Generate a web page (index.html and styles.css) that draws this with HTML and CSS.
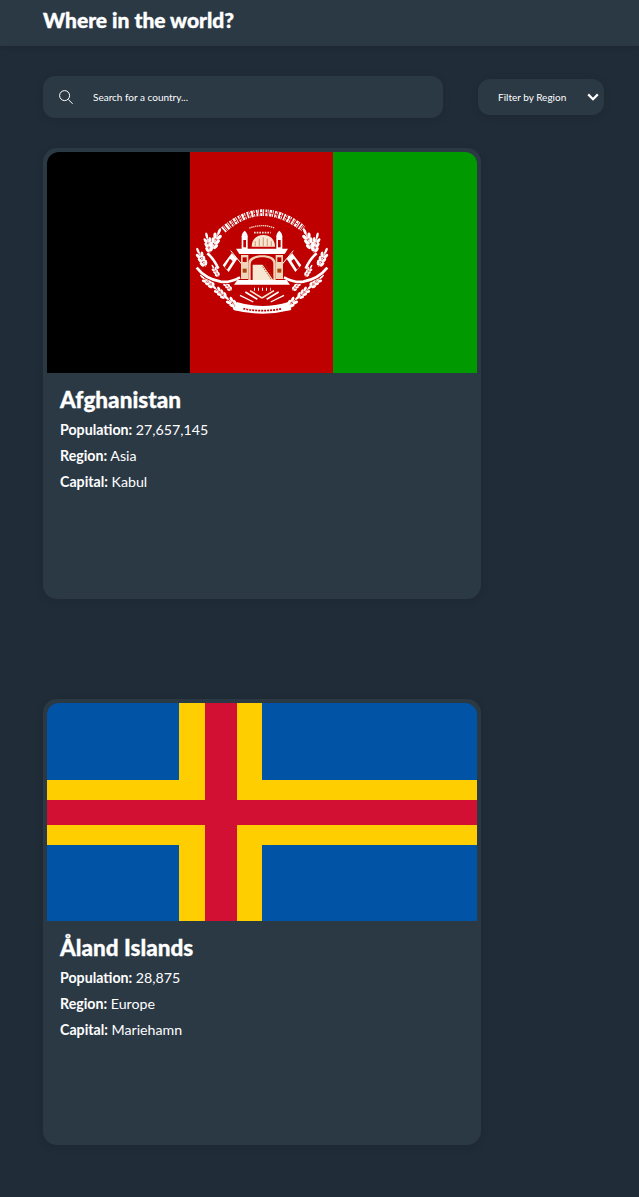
FILE: index.html
```html
<!DOCTYPE html>
<html lang="en">
<head>
    <meta charset="UTF-8">
    <title>Where in the world?</title>
    <link rel="stylesheet" href="styles.css">
</head>
<body>
    <header class="topbar">
        <h1>Where in the world?</h1>
    </header>

    <main class="content">
        <div class="controls">
            <label class="search">
                <svg class="search-icon" viewBox="0 0 14 14" width="14" height="14">
                    <circle cx="5.6" cy="5.6" r="5" fill="none" stroke="#fff" stroke-width="1"/>
                    <path d="M9.2 9.4 13.6 13.8" fill="none" stroke="#fff" stroke-width="1"/>
                </svg>
                <input type="text" placeholder="Search for a country...">
            </label>
            <div class="filter">
                <span>Filter by Region</span>
                <svg class="chevron" viewBox="0 0 12 8" width="12" height="8">
                    <path d="M1.2 1.4 6 6.2 10.8 1.4" fill="none" stroke="#fff" stroke-width="2.2"/>
                </svg>
            </div>
        </div>

        <div class="cards">
            <article class="card">
                <svg class="flag" viewBox="0 0 430 221">
                    <defs>
                        <!-- 麦の穂 -->
                        <g id="ear">
                            <path d="M0 0V-52" stroke="#fff" stroke-width="2.5"/>
                            <g fill="#fff">
                                <ellipse cx="-6" cy="-10" rx="4.4" ry="8" transform="rotate(-22 -6 -10)"/>
                                <ellipse cx="6" cy="-10" rx="4.4" ry="8" transform="rotate(22 6 -10)"/>
                                <ellipse cx="-6" cy="-23" rx="4.4" ry="8" transform="rotate(-22 -6 -23)"/>
                                <ellipse cx="6" cy="-23" rx="4.4" ry="8" transform="rotate(22 6 -23)"/>
                                <ellipse cx="-6" cy="-36" rx="4.4" ry="8" transform="rotate(-22 -6 -36)"/>
                                <ellipse cx="6" cy="-36" rx="4.4" ry="8" transform="rotate(22 6 -36)"/>
                                <ellipse cx="0" cy="-50" rx="3.6" ry="9"/>
                            </g>
                        </g>
                        <!-- 紋章の左半分 -->
                        <g id="emblem-side">
                            <use href="#ear" transform="translate(66 148) rotate(22) scale(1.15)"/>
                            <use href="#ear" transform="translate(60 158) rotate(-11) scale(1.05)"/>
                            <use href="#ear" transform="translate(46 200) rotate(-25) scale(1.05)"/>
                            <use href="#ear" transform="translate(72 262) rotate(-48) scale(0.95)"/>
                            <use href="#ear" transform="translate(108 294) rotate(-48) scale(0.95)"/>
                            <use href="#ear" transform="translate(148 328) rotate(-48) scale(1.05)"/>
                            <use href="#ear" transform="translate(86 230) rotate(-30) scale(0.7)"/>
                            <use href="#ear" transform="translate(124 272) rotate(-40) scale(0.7)"/>
                            <path d="M52 160C64 170 76 186 85 206" fill="none" stroke="#fff" stroke-width="8"/>
                            <path d="M20 203C38 226 64 240 92 245C112 248 130 243 150 232" fill="none" stroke="#be0000" stroke-width="13"/>
                            <path d="M20 203C38 226 64 240 92 245C112 248 130 243 150 232" fill="none" stroke="#fff" stroke-width="8"/>
                            <!-- 旗 -->
                            <path d="M122 152 168 208" stroke="#fff" stroke-width="3"/>
                            <path d="M125 160 142 176 116 216 98 196Z" fill="#fff"/>
                            <path d="M120 176 128 183 111 209 104 202Z" fill="#be0000"/>
                            <!-- 下の束 -->
                            <path d="M166 276 202 298" stroke="#fff" stroke-width="5"/>
                            <path d="M180 272 216 294" stroke="#f7e6d2" stroke-width="5"/>
                            <path d="M150 286 190 306" stroke="#fff" stroke-width="4"/>
                            <!-- 建物の柱 -->
                            <rect x="155" y="108" width="18" height="40" fill="#fff"/>
                            <path d="M155 110C155 100 160 96 164 92C168 96 173 100 173 110Z" fill="#fff"/>
                            <rect x="160" y="120" width="8" height="22" fill="#be0000"/>
                            <rect x="153" y="165" width="22" height="72" fill="#f1d5b8"/>
                            <rect x="158" y="172" width="12" height="14" fill="#be0000"/>
                            <rect x="158" y="206" width="12" height="12" fill="#a8470f"/>
                        </g>
                    </defs>
                    <rect width="143" height="221" fill="#000"/>
                    <rect x="143" width="143" height="221" fill="#be0000"/>
                    <rect x="286" width="144" height="221" fill="#009900"/>
                    <!-- 紋章 -->
                    <g transform="translate(143 48) scale(0.3333)">
                        <!-- 上の文字帯 -->
                        <path d="M100 90Q215 -12 340 86" fill="none" stroke="#fff" stroke-width="20" stroke-dasharray="5 2 2 3 7 2 3 4"/>
                        <path d="M120 76Q215 2 322 72" fill="none" stroke="#be0000" stroke-width="3" stroke-dasharray="9 7"/>
                        <path d="M178 84Q218 70 254 84" fill="none" stroke="#f4e3cf" stroke-width="4" stroke-dasharray="4 2"/>
                        <path d="M192 98H242" fill="none" stroke="#f4e3cf" stroke-width="5" stroke-dasharray="5 3"/>

                        <use href="#emblem-side"/>
                        <use href="#emblem-side" transform="translate(432) scale(-1 1)"/>

                        <!-- 建物 -->
                        <path d="M185 140C185 118 200 105 220 105C240 105 255 118 255 140Z" fill="#f7e6d2"/>
                        <path d="M196 138V124M208 138V116M220 138V112M232 138V116M244 138V124" stroke="#d9a987" stroke-width="4"/>
                        <path d="M138 146H294L284 162H148Z" fill="#fff"/>
                        <path d="M175 240V190C175 172 196 166 217 166C238 166 257 172 257 190V240Z" fill="#f1d5b8"/>
                        <path d="M182 240V192C182 178 200 172 217 172C236 172 250 178 250 192V240Z" fill="#be0000"/>
                        <path d="M188 240V194H218L250 240Z" fill="#f7e6d2"/>
                        <path d="M218 200 245 240M226 196 250 232" stroke="#a8470f" stroke-width="3" stroke-dasharray="4 4"/>
                        <path d="M142 240H290L300 254H132Z" fill="#fff"/>
                        <!-- 年号 -->
                        <path d="M192 268H242" fill="none" stroke="#fff" stroke-width="9" stroke-dasharray="3 9"/>
                        <!-- 下の帯 -->
                        <path d="M140 306Q216 330 296 306L304 330Q216 352 130 330Z" fill="#fff"/>
                        <path d="M160 326Q216 338 276 326" fill="none" stroke="#be0000" stroke-width="5" stroke-dasharray="6 3"/>
                    </g>
                </svg>
                <div class="card-body card-body-long">
                    <h2>Afghanistan</h2>
                    <p><b>Population:</b> 27,657,145</p>
                    <p><b>Region:</b> Asia</p>
                    <p><b>Capital:</b> Kabul</p>
                </div>
            </article>

            <article class="card">
                <svg class="flag" viewBox="0 0 430 218">
                    <rect width="430" height="218" fill="#0053a5"/>
                    <rect x="132" width="83" height="218" fill="#ffce00"/>
                    <rect y="77" width="430" height="65" fill="#ffce00"/>
                    <rect x="158" width="32" height="218" fill="#d21034"/>
                    <rect y="97" width="430" height="25" fill="#d21034"/>
                </svg>
                <div class="card-body">
                    <h2>Åland Islands</h2>
                    <p><b>Population:</b> 28,875</p>
                    <p><b>Region:</b> Europe</p>
                    <p><b>Capital:</b> Mariehamn</p>
                </div>
            </article>
        </div>
    </main>
</body>
</html>
```

FILE: styles.css
```css
* {
    box-sizing: border-box;
}

body {
    font-family: 'Lato', 'Open Sans', sans-serif;
    margin: 0;
    background-color: #202c37;
    color: white;
}

.topbar {
    height: 46px;
    padding: 0 43px;
    background-color: #2b3945;
    box-shadow: 0 2px 4px rgba(0, 0, 0, 0.1);
}

.topbar h1 {
    margin: 0;
    font-size: 21px;
    font-weight: 900;
    line-height: 40px;
    -webkit-text-stroke: 0.4px white;
}

.content {
    padding: 30px 35px 52px 43px;
}

.controls {
    display: flex;
    align-items: center;
    justify-content: space-between;
}

.search {
    display: flex;
    align-items: center;
    width: 400px;
    height: 42px;
    padding-left: 16px;
    background-color: #2b3945;
    border-radius: 12px;
    box-shadow: 0 2px 8px rgba(0, 0, 0, 0.1);
}

.search-icon {
    flex: none;
}

.search input {
    flex: 1;
    min-width: 0;
    margin-left: 20px;
    padding: 0;
    border: none;
    outline: none;
    background: transparent;
    color: white;
    font-family: inherit;
    font-size: 10px;
}

.search input::placeholder {
    color: white;
    opacity: 1;
}

.filter {
    display: flex;
    align-items: center;
    justify-content: space-between;
    width: 126px;
    height: 36px;
    padding: 0 5px 0 20px;
    background-color: #2b3945;
    border-radius: 12px;
    box-shadow: 0 2px 8px rgba(0, 0, 0, 0.1);
    font-size: 10px;
}

.cards {
    display: flex;
    flex-direction: column;
    gap: 100px;
    margin-top: 30px;
}

.card {
    width: 438px;
    padding: 4px 4px 0;
    background-color: #2b3945;
    border-radius: 14px;
    box-shadow: 0 2px 8px rgba(0, 0, 0, 0.1);
}

.flag {
    display: block;
    width: 100%;
    border-radius: 12px 12px 0 0;
}

.card-body {
    height: 224px;
    padding: 14px 13px 0;
}

.card-body-long {
    height: 226px;
}

.card-body h2 {
    margin: 0 0 4px;
    font-size: 22.5px;
    font-weight: 900;
    line-height: 26px;
    -webkit-text-stroke: 0.3px white;
}

.card-body p {
    margin: 0;
    font-size: 14.2px;
    line-height: 26px;
}

.card-body b {
    font-weight: 700;
}
```
